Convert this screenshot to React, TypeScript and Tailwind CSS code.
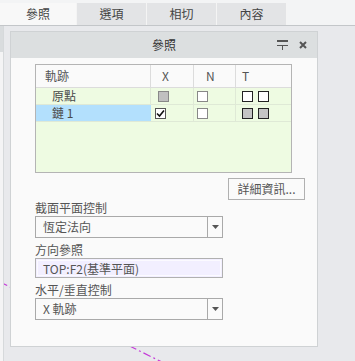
import React from "react";

function Box({ fill, border, check }: { fill: string; border: string; check?: boolean }) {
  return (
    <div
      className="w-[11px] h-[11px] border flex items-center justify-center"
      style={{ background: fill, borderColor: border }}
    >
      {check && (
        <svg width="9" height="9" viewBox="0 0 9 9">
          <path d="M1 4.5 L3.5 7 L8 1.5" stroke="#111" strokeWidth="1.6" fill="none" />
        </svg>
      )}
    </div>
  );
}

function Select({ value }: { value: string }) {
  return (
    <div className="w-[188px] h-[22px] border border-[#a9a9a9] bg-[#fafafa] flex">
      <div className="flex-1 pl-[7px] leading-[20px] text-[12px] text-[#555]">{value}</div>
      <div className="w-[15px] border-l border-[#a9a9a9] flex items-center justify-center">
        <svg width="7" height="4" viewBox="0 0 7 4">
          <path d="M0 0 H7 L3.5 4 Z" fill="#555" />
        </svg>
      </div>
    </div>
  );
}

export default function App() {
  return (
    <div className="w-[355px] h-[361px] relative overflow-hidden bg-[#e8e9ec] font-['Noto_Sans_CJK_TC',sans-serif] text-[#4a4a4a]">
      <svg className="absolute left-0 top-0" width="355" height="361">
        <line x1="0" y1="282" x2="170" y2="366" stroke="#c43ad8" strokeWidth="1.2" strokeDasharray="8 3 2 3" />
      </svg>
      <div className="relative flex flex-col">
        <div className="h-[3px] bg-[#f3f4f5]" />
        <div className="h-[23px] flex bg-[#f3f4f5] border-b border-[#c3c6c9] text-[12px] text-[#444]">
          <div className="w-[76px] bg-[#f8f8f8] flex items-center justify-center">參照</div>
          <div className="w-[70px] bg-[#e3e4e6] border-l border-[#f4f4f4] flex items-center justify-center">選項</div>
          <div className="w-[70px] bg-[#e3e4e6] border-l border-[#f4f4f4] flex items-center justify-center">相切</div>
          <div className="w-[70px] bg-[#e3e4e6] border-l border-[#f4f4f4] flex items-center justify-center">內容</div>
          <div className="flex-1 border-l border-[#f4f4f4]" />
        </div>
        <div className="flex">
          <div className="w-[10px] flex">
            <div className="w-[3px] h-[335px] flex flex-col">
              <div className="h-[26px] bg-[#d9dcde]" />
              <div className="flex-1 bg-[#f4f4f5]" />
            </div>
            <div className="w-[1px] h-[335px] bg-[#d6d9db]" />
          </div>
          <div className="mt-[5px] w-[308px] h-[316px] border border-[#cfd2d4] bg-[#fafafa] flex flex-col">
            <div className="h-[26px] bg-[#dcdfe0] relative flex items-center justify-center text-[12px] text-[#333]">
              參照
              <div className="absolute right-[10px] top-0 h-full flex items-center gap-[11px]">
                <svg width="11" height="10" viewBox="0 0 11 10">
                  <rect x="0" y="0" width="11" height="2" fill="#555" />
                  <rect x="0" y="5" width="11" height="1" fill="#555" />
                  <rect x="5" y="5" width="1" height="5" fill="#555" />
                </svg>
                <svg width="8" height="8" viewBox="0 0 8 8">
                  <path d="M1 1 L7 7 M7 1 L1 7" stroke="#555" strokeWidth="2" />
                </svg>
              </div>
            </div>
            <div className="flex flex-col pl-[24px] pt-[6px]">
              <div className="w-[257px] h-[109px] border border-[#b4b4b4] bg-[#eefbe2] flex flex-col text-[12px]">
                <div className="h-[23px] flex bg-[#fafafa] border-b border-[#dcdcdc] text-[#555]">
                  <div className="w-[115px] border-r border-[#dcdcdc] pl-[9px] leading-[22px]">軌跡</div>
                  <div className="w-[43px] border-r border-[#dcdcdc] pl-[11px] leading-[22px]">X</div>
                  <div className="w-[42px] border-r border-[#dcdcdc] pl-[12px] leading-[22px]">N</div>
                  <div className="flex-1 pl-[6px] leading-[22px]">T</div>
                </div>
                <div className="h-[17px] flex border-b border-[#dfe9d6]">
                  <div className="w-[115px] border-r border-[#dfe9d6] pl-[16px] leading-[16px]">原點</div>
                  <div className="w-[43px] border-r border-[#dfe9d6] pl-[7px] flex items-center">
                    <Box fill="#c0c0c0" border="#888" />
                  </div>
                  <div className="w-[42px] border-r border-[#dfe9d6] pl-[3px] flex items-center">
                    <Box fill="#fff" border="#888" />
                  </div>
                  <div className="flex-1 pl-[6px] flex items-center gap-[5px]">
                    <Box fill="#fff" border="#222" />
                    <Box fill="#fff" border="#222" />
                  </div>
                </div>
                <div className="h-[17px] flex border-b border-[#dfe9d6]">
                  <div className="w-[115px] bg-[#b3e0fd] pl-[16px] leading-[16px]">鏈 1</div>
                  <div className="w-[43px] border-r border-[#dfe9d6] pl-[4px] flex items-center">
                    <Box fill="#fff" border="#555" check />
                  </div>
                  <div className="w-[42px] border-r border-[#dfe9d6] pl-[3px] flex items-center">
                    <Box fill="#fff" border="#888" />
                  </div>
                  <div className="flex-1 pl-[6px] flex items-center gap-[5px]">
                    <Box fill="#c4c4c4" border="#222" />
                    <Box fill="#c4c4c4" border="#222" />
                  </div>
                </div>
              </div>
              <div className="flex justify-end pr-[12px] mt-[5px]">
                <div className="w-[77px] h-[22px] border border-[#b0b0b0] bg-[#fafafa] text-[12px] text-[#555] flex items-center justify-center">
                  詳細資訊...
                </div>
              </div>
              <div className="h-[16px] leading-[16px] text-[12px] text-[#555]">截面平面控制</div>
              <Select value="恆定法向" />
              <div className="h-[20px] pt-[4px] leading-[16px] text-[12px] text-[#555]">方向參照</div>
              <div className="w-[188px] h-[20px] border border-[#b0b0b0] bg-[#f2efff] p-[1px]">
                <div className="h-full border border-[#fbfaff] pl-[5px] leading-[15px] text-[12px] text-[#555]">TOP:F2(基準平面)</div>
              </div>
              <div className="h-[20px] pt-[4px] leading-[16px] text-[12px] text-[#555]">水平/垂直控制</div>
              <Select value="X 軌跡" />
            </div>
          </div>
        </div>
      </div>
    </div>
  );
}
